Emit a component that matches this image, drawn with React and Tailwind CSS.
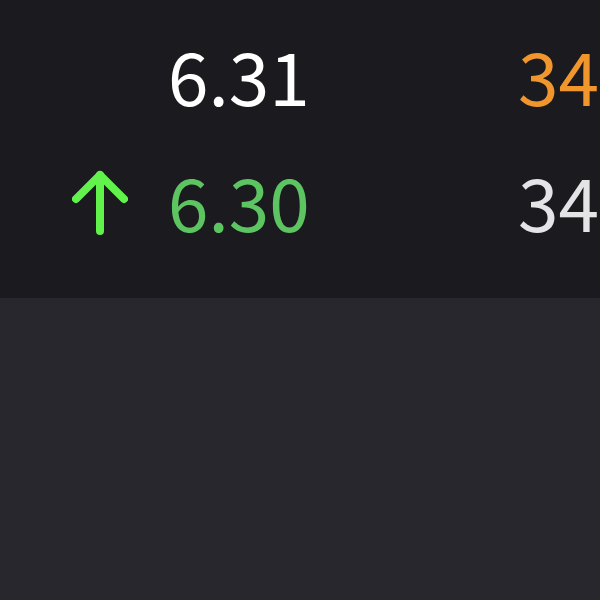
export default function App() {
  const font = { fontFamily: '"Noto Sans CJK JP", "Noto Sans", sans-serif' };
  return (
    <div className="w-[600px] h-[600px] overflow-hidden bg-[#29272e] flex flex-col" style={font}>
      <div className="h-[298px] bg-[#1b1a1e] pt-[11px] flex flex-col">
        <div className="h-[126px] flex items-center whitespace-nowrap text-[73px] leading-[126px]">
          <div className="w-[168px] shrink-0" />
          <div className="w-[350px] shrink-0 text-white">6.31</div>
          <div className="text-[#f0962c]">34</div>
        </div>
        <div className="h-[126px] flex items-center whitespace-nowrap text-[73px] leading-[126px]">
          <div className="w-[168px] shrink-0 flex items-center pl-[72px]">
            <svg width="56" height="66" viewBox="0 0 56 66" className="mt-[6px]" fill="none" stroke="#62f24c" strokeWidth="8" strokeLinecap="round" strokeLinejoin="round">
              <path d="M28 61V5" />
              <path d="M4 29L28 5L52 29" />
            </svg>
          </div>
          <div className="w-[350px] shrink-0 text-[#5cc562]">6.30</div>
          <div className="text-[#e4e4e6]">34</div>
        </div>
      </div>
      <div className="flex-1" />
    </div>
  );
}
